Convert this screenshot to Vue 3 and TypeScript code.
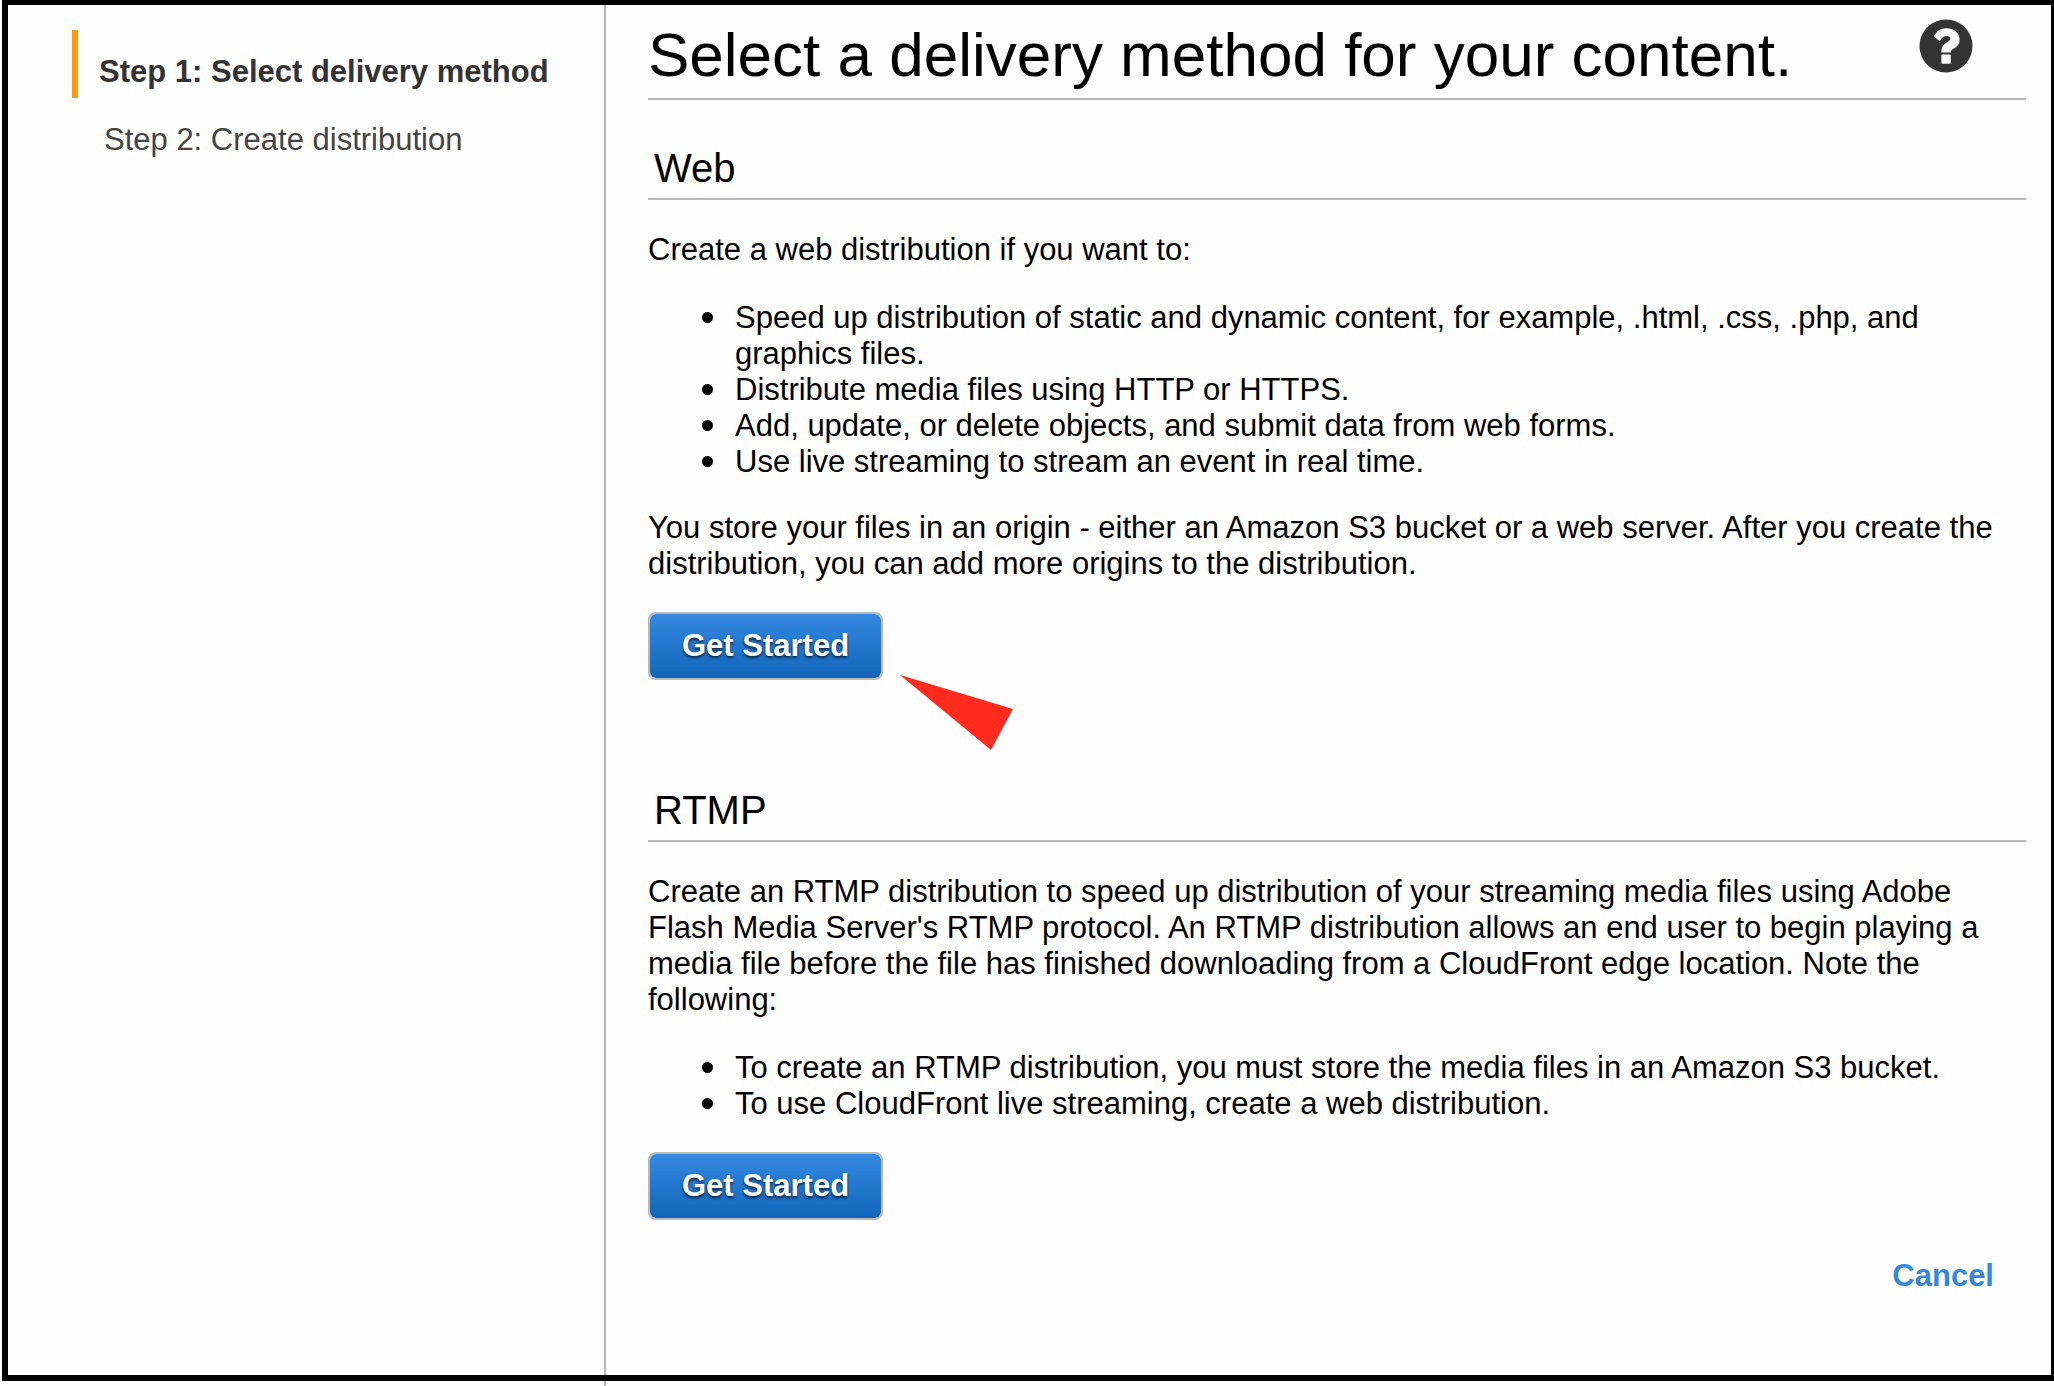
<script setup lang="ts">
interface Step {
  label: string
  current: boolean
}

interface Method {
  id: string
  title: string
  intro: string
  points: string[]
  note?: string
  highlighted?: boolean
}

const steps: Step[] = [
  { label: 'Step 1: Select delivery method', current: true },
  { label: 'Step 2: Create distribution', current: false },
]

const methods: Method[] = [
  {
    id: 'web',
    title: 'Web',
    intro: 'Create a web distribution if you want to:',
    points: [
      'Speed up distribution of static and dynamic content, for example, .html, .css, .php, and graphics files.',
      'Distribute media files using HTTP or HTTPS.',
      'Add, update, or delete objects, and submit data from web forms.',
      'Use live streaming to stream an event in real time.',
    ],
    note: 'You store your files in an origin - either an Amazon S3 bucket or a web server. After you create the distribution, you can add more origins to the distribution.',
    highlighted: true,
  },
  {
    id: 'rtmp',
    title: 'RTMP',
    intro:
      "Create an RTMP distribution to speed up distribution of your streaming media files using Adobe Flash Media Server's RTMP protocol. An RTMP distribution allows an end user to begin playing a media file before the file has finished downloading from a CloudFront edge location. Note the following:",
    points: [
      'To create an RTMP distribution, you must store the media files in an Amazon S3 bucket.',
      'To use CloudFront live streaming, create a web distribution.',
    ],
  },
]
</script>

<template>
  <div class="wizard">
    <nav class="sidebar" aria-label="Steps">
      <ol class="steps">
        <li
          v-for="step in steps"
          :key="step.label"
          class="step"
          :class="{ current: step.current }"
          :aria-current="step.current ? 'step' : undefined"
        >
          {{ step.label }}
        </li>
      </ol>
    </nav>

    <main class="content">
      <header class="header">
        <h1 class="title">Select a delivery method for your content.</h1>
        <button class="help" type="button" aria-label="Help">
          <svg viewBox="0 0 54 54" width="54" height="54" aria-hidden="true">
            <circle cx="27" cy="27" r="26.5" fill="#333" />
            <path
              d="M14.8 17.6C17.4 12 21.6 9.2 27.2 9.2C34.8 9.2 40.6 13.6 40.6 20.4C40.6 25.2 38 27.6 34.8 29.6C32.6 31 31.8 31.8 31.8 33.6H22.4V31.4C22.4 27.6 24.6 25.4 28 23.2C30.4 21.8 31.4 21 31.4 19.6C31.4 18 29.8 17 27.4 17C24.6 17 22.8 18.6 20.8 22.2Z"
              fill="#fefefe"
            />
            <rect x="22.4" y="35.6" width="9.4" height="9.2" rx="1" fill="#fefefe" />
          </svg>
        </button>
      </header>

      <section v-for="method in methods" :key="method.id" class="method" :aria-labelledby="method.id">
        <h2 :id="method.id" class="method-title">{{ method.title }}</h2>
        <p class="intro">{{ method.intro }}</p>
        <ul class="points">
          <li v-for="point in method.points" :key="point" class="point">
            <span>{{ point }}</span>
          </li>
        </ul>
        <p v-if="method.note" class="note">{{ method.note }}</p>
        <div class="action">
          <button class="start" type="button">Get Started</button>
          <svg
            v-if="method.highlighted"
            class="pointer"
            viewBox="0 0 114 76"
            width="114"
            height="76"
            aria-hidden="true"
          >
            <path d="M0 0L113 34L91 75Z" fill="#ff2b1c" />
          </svg>
        </div>
      </section>

      <footer class="footer">
        <a class="cancel" href="#">Cancel</a>
      </footer>
    </main>

    <div class="frame" aria-hidden="true"></div>
  </div>
</template>

<style>
body {
  margin: 0;
  background: #fefefe;
}
</style>

<style scoped>
.wizard {
  position: relative;
  display: flex;
  box-sizing: border-box;
  min-height: 100vh;
  font-family: 'Liberation Sans', Arial, sans-serif;
  font-size: 31px;
  line-height: 36px;
  color: #000;
}

.frame {
  position: absolute;
  inset: 0 0 5px 2px;
  border: solid #000;
  border-width: 5px 3px 6px 6px;
  pointer-events: none;
}

.sidebar {
  box-sizing: border-box;
  flex: 0 0 604px;
  padding: 30px 0 0 72px;
}

.steps {
  margin: 0;
  padding: 0;
  list-style: none;
}

.step {
  padding: 24px 0 8px 26px;
  border-left: 6px solid transparent;
  color: #444;
}

.step.current {
  padding-left: 21px;
  border-left-color: #ff9914;
  font-weight: bold;
  color: #333;
}

.content {
  flex: 1;
  min-width: 0;
  padding: 19px 28px 80px 42px;
  border-left: 2px solid #b8b8b8;
}

.header {
  display: flex;
  justify-content: space-between;
  align-items: flex-start;
  padding: 0 53px 7px 0;
  border-bottom: 2px solid #b8b8b8;
}

.title {
  margin: 0;
  font-size: 62px;
  line-height: 72px;
  font-weight: normal;
}

.help {
  flex: none;
  display: block;
  padding: 0;
  border: 0;
  background: none;
  cursor: pointer;
}

.help svg {
  display: block;
}

.method {
  margin-top: 44px;
}

.method + .method {
  margin-top: 106px;
}

.method-title {
  margin: 0;
  padding: 0 6px 6px;
  border-bottom: 2px solid #b8b8b8;
  font-size: 40px;
  line-height: 48px;
  font-weight: normal;
}

.intro {
  margin: 32px 0 0;
}

.points {
  margin: 32px 0 30px;
  padding: 0 0 0 54px;
  list-style: none;
}

.point {
  display: flex;
  align-items: flex-start;
}

.point::before {
  content: '';
  flex: none;
  width: 11px;
  height: 11px;
  margin: 12px 22px 0 0;
  border-radius: 50%;
  background: #000;
}

.note {
  margin: 30px 0;
}

.action {
  position: relative;
  display: flex;
}

.start {
  box-sizing: border-box;
  height: 68px;
  padding: 0 32px;
  border: 2px solid #b8b8b8;
  border-radius: 8px;
  background: linear-gradient(#3488e0, #1166bb) padding-box;
  font: bold 31px/36px 'Liberation Sans', Arial, sans-serif;
  color: #fff;
  text-shadow: 0 2px 3px rgba(0, 0, 0, 0.7);
  cursor: pointer;
}

.pointer {
  position: absolute;
  top: 63px;
  left: 252px;
}

.footer {
  display: flex;
  justify-content: flex-end;
  margin-top: 38px;
  padding-right: 32px;
}

.cancel {
  font-weight: bold;
  color: #3388dd;
  text-decoration: none;
}
</style>
